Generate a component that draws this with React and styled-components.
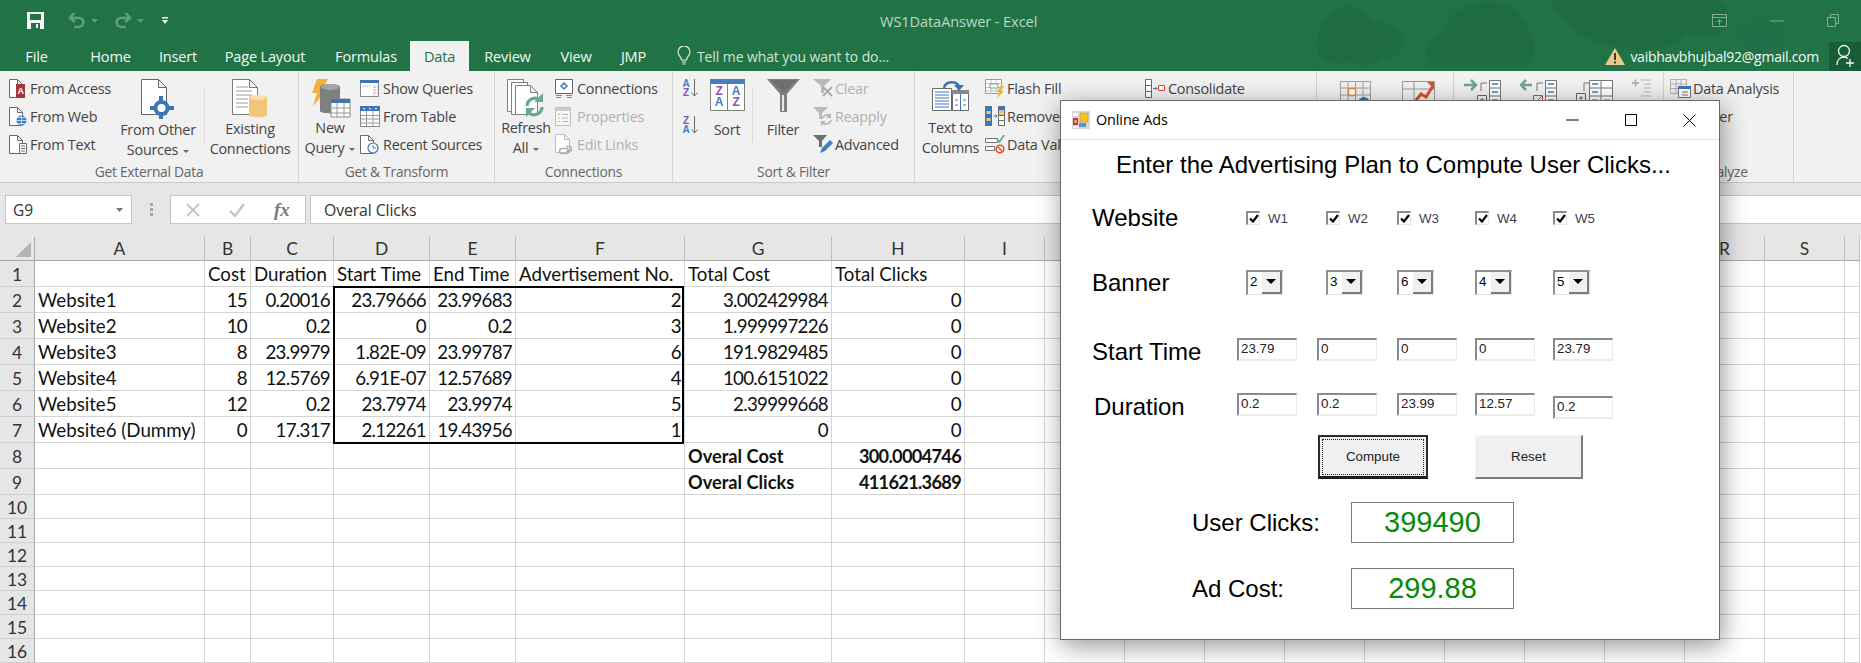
import styled, { createGlobalStyle } from 'styled-components';

const UI_FONT = '"Open Sans", "Noto Sans", sans-serif';
const CELL_FONT = 'Lato, "Open Sans", sans-serif';
const FORM_FONT = '"Liberation Sans", Arial, sans-serif';

const GlobalStyle = createGlobalStyle`
  html, body {
    margin: 0;
    padding: 0;
    background: #ffffff;
  }
`;

const Page = styled.div`
  position: relative;
  width: 1861px;
  height: 663px;
  overflow: hidden;
  font-family: ${UI_FONT};
  background: #ffffff;
`;

/* title bar + tabs */
const Head = styled.div`
  position: relative;
  height: 71px;
  background: #217346;
`;

const Blobs = styled.svg`
  position: absolute;
  top: 0;
  left: 1280px;
`;

const TitleBar = styled.div`
  position: relative;
  display: flex;
  align-items: center;
  height: 41px;
`;

const QuickAccess = styled.div`
  display: flex;
  align-items: center;
  width: 880px;
  padding-left: 27px;
  box-sizing: border-box;
  gap: 5px;
`;

const WindowTitle = styled.div`
  font-size: 14.6px;
  letter-spacing: -0.1px;
  color: #bcd6c7;
  white-space: nowrap;
`;

const WindowButtons = styled.div`
  display: flex;
  align-items: center;
  margin-left: auto;
  padding-right: 22px;
  gap: 43px;
`;

const TabBar = styled.div`
  position: relative;
  display: flex;
  height: 30px;
`;

const Tab = styled.div`
  width: ${props => props.$width}px;
  display: flex;
  align-items: center;
  justify-content: center;
  font-size: 14.6px;
  letter-spacing: -0.2px;
  color: ${props => props.$active ? '#217346' : '#f2f7f4'};
  background: ${props => props.$active ? '#f1f1f1' : 'transparent'};
`;

const TellMe = styled.div`
  display: flex;
  align-items: center;
  gap: 6px;
  margin-left: 16px;
  font-size: 14px;
  letter-spacing: -0.1px;
  color: #cfe3d7;
`;

const Account = styled.div`
  display: flex;
  align-items: center;
  gap: 5px;
  margin-left: auto;
  height: 100%;
  font-size: 14px;
  letter-spacing: -0.25px;
  color: #f4f8f6;
`;

const ShareBox = styled.div`
  display: flex;
  align-items: center;
  gap: 2px;
  height: 29px;
  width: 32px;
  margin-left: 5px;
  padding-left: 7px;
  box-sizing: border-box;
  background: #185c37;
  overflow: hidden;
`;

/* ribbon */
const Ribbon = styled.div`
  display: flex;
  height: 111px;
  background: #f1f1f1;
  border-bottom: 1px solid #c9c9c9;
  color: #444444;
  font-size: 14.4px;
  letter-spacing: -0.25px;
`;

const Group = styled.div`
  width: ${props => props.$width}px;
  flex: none;
  display: flex;
  flex-direction: column;
  box-sizing: border-box;
  padding-top: 3px;
  position: relative;
  border-right: ${props => props.$open ? 'none' : '1px solid #d4d4d4'};
`;

const GroupItems = styled.div`
  display: flex;
  height: 84px;
  padding-left: ${props => props.$pad || 0}px;
`;

const GroupLabel = styled.div`
  margin-top: auto;
  padding-bottom: 1px;
  text-align: ${props => props.$align || 'center'};
  padding-left: ${props => props.$pad || 0}px;
  font-size: 13.8px;
  color: #666666;
  line-height: 18px;
`;

const Stack = styled.div`
  display: flex;
  flex-direction: column;
  width: ${props => props.$width}px;
  flex: none;
`;

const SmallRow = styled.div`
  display: flex;
  align-items: center;
  height: 28px;
  white-space: nowrap;
  color: ${props => props.$off ? '#b1b1b1' : 'inherit'};
`;

const IconSlot = styled.div`
  width: ${props => props.$width}px;
  flex: none;
  display: flex;
  align-items: center;
  justify-content: flex-start;
`;

const BigButton = styled.div`
  width: ${props => props.$width}px;
  flex: none;
  display: flex;
  flex-direction: column;
  align-items: center;
  white-space: nowrap;
`;

const BigIcon = styled.div`
  height: 46px;
  padding-top: 5px;
  box-sizing: border-box;
  display: flex;
  align-items: flex-start;
  justify-content: center;
`;

const BigText = styled.div`
  line-height: 20px;
  text-align: center;
`;

const Caret = styled.span`
  display: inline-block;
  width: 0;
  height: 0;
  margin-left: 5px;
  vertical-align: 2px;
  border-left: 3px solid transparent;
  border-right: 3px solid transparent;
  border-top: 3px solid #666666;
`;

const InnerRule = styled.div`
  width: 1px;
  height: 54px;
  margin: 14px 0 0 ${props => props.$left || 0}px;
  background: #dcdcdc;
  flex: none;
`;

const Spacer = styled.div`
  width: ${props => props.$width}px;
  flex: none;
`;

const SortGap = styled.div`
  height: 9px;
`;

const TopIcons = styled.div`
  display: flex;
  gap: ${props => props.$gap || 0}px;
  padding-left: ${props => props.$pad || 0}px;
  padding-top: ${props => props.$top || 5}px;
`;

/* formula bar */
const FormulaArea = styled.div`
  display: flex;
  align-items: flex-start;
  height: 54px;
  box-sizing: border-box;
  padding-top: 12px;
  background: #e6e6e6;
`;

const NameBox = styled.div`
  display: flex;
  align-items: center;
  justify-content: space-between;
  width: 127px;
  height: 29px;
  margin-left: 5px;
  padding: 0 8px 0 7px;
  box-sizing: border-box;
  background: #ffffff;
  border: 1px solid #c6c6c6;
  font-size: 15.5px;
  color: #333333;
`;

const Grip = styled.div`
  width: 3px;
  margin: 8px 17px 0 18px;
  height: 13px;
  background: repeating-linear-gradient(#a5a5a5 0 3px, transparent 3px 5px);
`;

const FxBox = styled.div`
  display: flex;
  align-items: center;
  width: 136px;
  height: 29px;
  box-sizing: border-box;
  padding-left: 15px;
  gap: 29px;
  background: #ffffff;
  border: 1px solid #c6c6c6;
`;

const FxMark = styled.span`
  font-family: "Liberation Serif", serif;
  font-style: italic;
  font-weight: 700;
  font-size: 19px;
  color: #7a7a7a;
`;

const FormulaInput = styled.div`
  flex: 1;
  height: 29px;
  margin-left: 4px;
  padding-left: 13px;
  box-sizing: border-box;
  display: flex;
  align-items: center;
  background: #ffffff;
  border: 1px solid #c6c6c6;
  border-right: none;
  font-size: 15.8px;
  letter-spacing: -0.1px;
  color: #333333;
`;

/* worksheet */
const Sheet = styled.div`
  position: relative;
  display: grid;
  grid-template-columns: 35px 170px 46px 83px 96px 86px 169px 147px 133px repeat(11, 80px) 15px;
  grid-template-rows: 24px repeat(9, 26px) repeat(7, 24px);
  font-family: ${CELL_FONT};
  font-size: 18.7px;
  color: #111111;
`;

const Corner = styled.div`
  background: #e6e6e6;
  border-right: 1px solid #a8a8a8;
  border-bottom: 1px solid #a8a8a8;
  display: flex;
  align-items: flex-end;
  justify-content: flex-end;
  padding: 0 3px 3px 0;
`;

const ColHead = styled.div`
  background: #e6e6e6;
  border-right: 1px solid #bcbcbc;
  border-bottom: 1px solid #a8a8a8;
  text-align: center;
  font-size: 17.4px;
  line-height: 24px;
  color: #333333;
`;

const RowHead = styled.div`
  background: #e6e6e6;
  border-right: 1px solid #a8a8a8;
  border-bottom: 1px solid #cfcfcf;
  text-align: center;
  font-size: 17.4px;
  line-height: ${props => props.$height + 1}px;
  color: #333333;
`;

const Cell = styled.div`
  border-right: 1px solid #d4d4d4;
  border-bottom: 1px solid #d4d4d4;
  padding: 0 3px;
  line-height: ${props => props.$height + 1}px;
  text-align: ${props => props.$right ? 'right' : 'left'};
  font-weight: ${props => props.$bold ? 700 : 400};
  font-size: ${props => props.$bold ? '18.2px' : 'inherit'};
  letter-spacing: ${props => props.$right ? '-0.7px' : '0'};
  white-space: nowrap;
  overflow: visible;
`;

const SelectionBox = styled.div`
  position: absolute;
  grid-column: 5 / 8;
  grid-row: 3 / 9;
  inset: -1px 1px -1px -1px;
  border: 2px solid #000000;
`;

/* the Online Ads dialog */
const Dialog = styled.div`
  position: absolute;
  left: 1060px;
  top: 100px;
  width: 660px;
  height: 540px;
  box-sizing: border-box;
  background: #ffffff;
  border: 1px solid #6b6b6b;
  box-shadow: 2px 6px 24px rgba(0, 0, 0, 0.42);
  font-family: ${FORM_FONT};
  color: #000000;
`;

const DialogBar = styled.div`
  display: flex;
  align-items: center;
  height: 38px;
  padding-left: 11px;
  border-bottom: 1px solid #e3e3e3;
  font-family: ${UI_FONT};
  font-size: 14.4px;
  letter-spacing: -0.1px;
`;

const DialogTitle = styled.div`
  margin-left: 6px;
  margin-top: -2px;
`;

const DialogButtons = styled.div`
  display: flex;
  align-items: center;
  margin-left: auto;
  padding-right: 23px;
  gap: 46px;
`;

const Heading = styled.div`
  height: 52px;
  padding-left: 55px;
  line-height: 50px;
  font-size: 24px;
  white-space: nowrap;
`;

const FormRow = styled.div`
  display: grid;
  grid-template-columns: ${props => props.$columns};
  align-items: ${props => props.$align || 'center'};
  height: ${props => props.$height}px;
  margin-top: ${props => props.$top || 0}px;
  padding-left: 31px;
`;

const FieldLabel = styled.div`
  font-size: 24px;
  line-height: 24px;
  margin-top: ${props => props.$shift || 0}px;
  margin-left: ${props => props.$indent || 0}px;
`;

const CheckItem = styled.div`
  display: flex;
  align-items: center;
  gap: 8px;
  font-size: 13.33px;
  color: #3f3f50;
`;

const CheckBox = styled.div`
  width: 14px;
  height: 14px;
  box-sizing: border-box;
  display: flex;
  align-items: center;
  justify-content: center;
  background: #ffffff;
  border-top: 2px solid #8a8a8a;
  border-left: 2px solid #8a8a8a;
  border-right: 1px solid #e6e6e6;
  border-bottom: 1px solid #e6e6e6;
`;

const Combo = styled.div`
  display: flex;
  width: 37px;
  height: 25px;
  box-sizing: border-box;
  background: #ffffff;
  border-top: 2px solid #8f8f8f;
  border-left: 2px solid #8f8f8f;
  border-right: 1px solid #e3e3e3;
  border-bottom: 1px solid #e3e3e3;
  font-size: 13.33px;
`;

const ComboValue = styled.div`
  width: 14px;
  padding-left: 2px;
  line-height: 19px;
  box-sizing: border-box;
`;

const ComboArrow = styled.div`
  flex: 1;
  display: flex;
  align-items: center;
  justify-content: center;
  background: #f0f0f0;
  border-right: 2px solid #7d7d7d;
  border-bottom: 2px solid #7d7d7d;

  &::after {
    content: '';
    border-left: 5px solid transparent;
    border-right: 5px solid transparent;
    border-top: 5px solid #000000;
  }
`;

const TextBox = styled.div`
  width: 60px;
  height: 23px;
  box-sizing: border-box;
  padding-left: 2px;
  margin-top: ${props => props.$drop || 0}px;
  background: #ffffff;
  border-top: 2px solid #8a8a8a;
  border-left: 2px solid #8a8a8a;
  border-right: 1px solid #ececec;
  border-bottom: 2px solid #ececec;
  font-size: 13.33px;
  line-height: 18px;
  color: #222222;
`;

const ButtonRow = styled.div`
  display: flex;
  gap: 47px;
  margin-top: 19px;
  padding-left: 257px;
`;

const FormButton = styled.div`
  position: relative;
  width: ${props => props.$width}px;
  height: 44px;
  box-sizing: border-box;
  display: flex;
  align-items: center;
  justify-content: center;
  background: #f0f0f0;
  font-size: 13.33px;
  color: #222222;
  border: ${props => props.$focused ? '2px solid #2a2a2a' : '1px solid #f6f6f6'};
  border-bottom: ${props => props.$focused ? '3px solid #1c1c1c' : '2px solid #7d7d7d'};
  border-right: ${props => props.$focused ? '2px solid #2a2a2a' : '2px solid #7d7d7d'};
  outline: ${props => props.$focused ? '1px dotted #222222' : 'none'};
  outline-offset: -5px;
`;

const OutputRow = styled.div`
  display: flex;
  align-items: center;
  margin-top: ${props => props.$top}px;
  padding-left: 131px;
`;

const OutputLabel = styled.div`
  width: 159px;
  flex: none;
  font-size: 24px;
`;

const OutputBox = styled.div`
  width: 163px;
  height: 41px;
  box-sizing: border-box;
  display: flex;
  align-items: center;
  justify-content: center;
  border: 1px solid #7c7c7c;
  font-size: 29px;
  color: #078a07;
`;

/* ---------- drawings ---------- */

const Svg = ({ w, h, children }) => (
  <svg width={w} height={h} viewBox={`0 0 ${w} ${h}`} fill="none" style={{ display: 'block' }}>{children}</svg>
);

const Sheet16 = ({ x = 0, y = 0, w = 13, h = 18, stroke = '#6a6a6a', fold = 5 }) => (
  <path
    d={`M${x + .5} ${y + .5}h${w - fold}l${fold} ${fold}v${h - fold}h-${w}zM${x + w - fold + .5} ${y + .5}v${fold}h${fold}`}
    fill="#ffffff"
    stroke={stroke}
  />
);

const SaveIcon = () => (
  <Svg w={17} h={17}>
    <path d="M0 0h17v17H0z" fill="#f3f6f4" />
    <path d="M3 2h11v6H3z" fill="#217346" />
    <path d="M4 11h9v6H4z" fill="#217346" />
    <path d="M9 12h2v4H9z" fill="#f3f6f4" />
  </Svg>
);

const ArrowIcon = ({ flip }) => (
  <svg width="18" height="17" viewBox="0 0 18 17" fill="none" style={{ display: 'block', transform: flip ? 'scaleX(-1)' : 'none' }}>
    <path d="M6 1L2 6l5 4M2.5 6H11c6 0 6 9 -1 9H6" stroke="#5f9d7c" strokeWidth="2.6" />
  </svg>
);

const TinyDown = ({ color = '#5f9d7c' }) => (
  <Svg w={7} h={4}><path d="M0 0h7L3.500 4z" fill={color} /></Svg>
);

const CustomizeIcon = () => (
  <Svg w={6} h={8}>
    <path d="M0 0h6v1.500H0z" fill="#f3f6f4" />
    <path d="M0 3h6L3 7z" fill="#f3f6f4" />
  </Svg>
);

const RibbonDisplayIcon = () => (
  <Svg w={15} h={13}>
    <path d="M.5 .5h14v12H.5zM.5 3.500h14M7.500 11V6M5 8l2.500-2.500L10 8" stroke="#7fae94" />
  </Svg>
);

const MinIcon = ({ color = '#7fae94', w = 14 }) => (
  <Svg w={w} h={2}><path d={`M0 1h${w}`} stroke={color} /></Svg>
);

const RestoreIcon = () => (
  <Svg w={12} h={13}>
    <path d="M.5 3.500h8v9h-8zM3.500 3.500v-3h8v9h-3" stroke="#7fae94" />
  </Svg>
);

const Bulb = () => (
  <Svg w={14} h={20}>
    <path d="M4.500 14C4 10 1 9.500 1 6a6 6 0 0 1 12 0c0 3.500-3 4-3.500 8z" stroke="#e4efe9" strokeWidth="1.100" />
    <path d="M5 16h4M5.500 18h3" stroke="#e4efe9" strokeWidth="1.200" />
  </Svg>
);

const WarnIcon = () => (
  <Svg w={20} h={17}>
    <path d="M10 0l10 17H0z" fill="#e9c98d" />
    <path d="M9 5h2v7H9zM9 13.500h2v2H9z" fill="#4a3a1c" />
  </Svg>
);

const PersonPlus = () => (
  <Svg w={19} h={24}>
    <circle cx="8" cy="7" r="5.500" stroke="#f4f8f6" strokeWidth="1.300" />
    <path d="M1 21c0-5 3-8 7-8 2 0 3 .6 4 1.500" stroke="#f4f8f6" strokeWidth="1.300" />
    <path d="M14 15v8M10 19h8" stroke="#f4f8f6" strokeWidth="1.300" />
  </Svg>
);

const FromAccessIcon = () => (
  <Svg w={18} h={19}>
    <Sheet16 x={0} y={0} w={13} h={18} />
    <path d="M7 5h9v14H7z" fill="#a4373a" />
    <text x="11.500" y="15" textAnchor="middle" fontSize="9" fontWeight="700" fontFamily={FORM_FONT} fill="#ffffff">A</text>
  </Svg>
);

const FromWebIcon = () => (
  <Svg w={18} h={19}>
    <Sheet16 x={0} y={0} w={13} h={18} />
    <circle cx="12.500" cy="13.500" r="5" fill="#3f7fc1" />
    <path d="M7.500 13.500h10M12.500 8.500v10M9 10.500h7M9 16.500h7" stroke="#ffffff" strokeWidth=".7" />
  </Svg>
);

const FromTextIcon = () => (
  <Svg w={18} h={19}>
    <Sheet16 x={0} y={0} w={13} h={18} />
    <path d="M10.500 8.500h7v10h-7z" fill="#ffffff" stroke="#6a6a6a" />
    <path d="M12 11h4M12 13.500h4M12 16h4" stroke="#6a6a6a" />
  </Svg>
);

const OtherSourcesIcon = () => (
  <Svg w={34} h={44}>
    <Sheet16 x={0} y={0} w={25} h={35} fold={8} stroke="#666666" />
    <path d="M20 17v7M20 33v7M9 29h7M25 29h8" stroke="#3f75b5" strokeWidth="4" />
    <circle cx="20.500" cy="29" r="6" stroke="#3f75b5" strokeWidth="4" fill="#ffffff" />
  </Svg>
);

const ExistingIcon = () => (
  <Svg w={36} h={40}>
    <Sheet16 x={0} y={0} w={25} h={35} fold={8} stroke="#7a7a7a" />
    <path d="M4 8h12M4 12h16M4 16h16M4 20h12M4 24h12M4 28h12" stroke="#9a9a9a" />
    <path d="M17 18c0-2 18-2 18 0v18c0 3-18 3-18 0z" fill="#efc67a" />
    <ellipse cx="26" cy="18.500" rx="8" ry="2.500" fill="#f8e2b2" />
  </Svg>
);

const NewQueryIcon = () => (
  <Svg w={41} h={39}>
    <path d="M7 0h11l-6 11h5L3 27l4-13H2z" fill="#f2b13f" />
    <path d="M10 8c0-4 20-4 20 0v24c0 3-20 3-20 0z" fill="#7f7f7f" />
    <ellipse cx="20" cy="8" rx="9" ry="3" fill="#a5a5a5" />
    <path d="M21 20h19v18H21z" fill="#ffffff" stroke="#8a8a8a" />
    <path d="M21 20h19v4H21z" fill="#3f75b5" />
    <path d="M21 29h19M21 34h19M27 24v14M34 24v14" stroke="#9a9a9a" />
  </Svg>
);

const ShowQueriesIcon = () => (
  <Svg w={19} h={19}>
    <path d="M.5 1.500h18v16H.5z" fill="#ffffff" stroke="#8a8a8a" />
    <path d="M0 1h19v3H0z" fill="#3f75b5" />
    <path d="M14 6v11M15 8h3M15 11h3M15 14h3M3 7h8" stroke="#9a9a9a" strokeDasharray="1 1" />
  </Svg>
);

const FromTableIcon = () => (
  <Svg w={20} h={22}>
    <path d="M.5 1.500h19v20H.5z" fill="#ffffff" stroke="#8a8a8a" />
    <path d="M0 1h20v5H0z" fill="#3f75b5" />
    <path d="M3 3h2L4 5zM9 3h2l-1 2zM15 3h2l-1 2z" fill="#ffffff" />
    <path d="M1 10.500h18M1 14h18M1 18h18M6.500 6v15M13 6v15" stroke="#9a9a9a" />
  </Svg>
);

const RecentIcon = () => (
  <Svg w={19} h={20}>
    <Sheet16 x={0} y={1} w={13} h={18} />
    <circle cx="13" cy="14" r="5" fill="#ffffff" stroke="#3f75b5" strokeWidth="1.200" />
    <path d="M13 11v3h3" stroke="#3f75b5" />
  </Svg>
);

const RefreshIcon = () => (
  <Svg w={38} h={39}>
    <path d="M.5 .5h16v32H.5z" fill="#ffffff" stroke="#7f7f7f" />
    <path d="M4.500 3.500h16v32h-16z" fill="#ffffff" stroke="#7f7f7f" />
    <Sheet16 x={8} y={6} w={22} h={29} fold={7} stroke="#7f7f7f" />
    <path d="M20 27a8 8 0 0 1 13-6M35 28a8 8 0 0 1-13 6" stroke="#69a98f" strokeWidth="3.200" />
    <path d="M36 14v9h-9zM19 38v-9h9z" fill="#69a98f" />
  </Svg>
);

const ConnectionsIcon = () => (
  <Svg w={18} h={19}>
    <path d="M.5 .5h17v14H.5z" fill="#ffffff" stroke="#666666" />
    <path d="M1 16.500h6M11 16.500h6M1 18.500h5M12 18.500h5" stroke="#888888" />
    <path d="M9 3l4 4-4 4-4-4z" fill="#3f7fc1" />
    <circle cx="9" cy="7" r="1.500" fill="#ffffff" />
  </Svg>
);

const PropertiesIcon = () => (
  <Svg w={16} h={19}>
    <path d="M.5 .5h15v18H.5z" fill="#f7f7f7" stroke="#bdbdbd" />
    <path d="M1 1h14v3H1z" fill="#cccccc" />
    <path d="M3 7.500h2M7 7.500h6M3 11h2M7 11h6M3 14.500h2M7 14.500h6" stroke="#b5b5b5" />
  </Svg>
);

const EditLinksIcon = () => (
  <Svg w={18} h={21}>
    <Sheet16 x={0} y={0} w={14} h={18} stroke="#bdbdbd" />
    <path d="M7 14.500h4a2.500 2.500 0 0 1 0 5H7a2.500 2.500 0 0 1 0-5zM11 12.500h3a2.500 2.500 0 0 1 0 5h-3" stroke="#b0b0b0" strokeWidth="1.500" />
  </Svg>
);

const Letters = ({ x, y, first, second, firstColor, secondColor, size = 10 }) => (
  <>
    <text x={x} y={y} textAnchor="middle" fontSize={size} fontWeight="700" fontFamily={FORM_FONT} fill={firstColor}>{first}</text>
    <text x={x} y={y + size - 1} textAnchor="middle" fontSize={size} fontWeight="700" fontFamily={FORM_FONT} fill={secondColor}>{second}</text>
  </>
);

const SortSmall = ({ down }) => (
  <Svg w={18} h={20}>
    <Letters
      x={5}
      y={9}
      first={down ? 'Z' : 'A'}
      second={down ? 'A' : 'Z'}
      firstColor={down ? '#7f54b3' : '#3f7fc1'}
      secondColor={down ? '#3f7fc1' : '#7f54b3'}
    />
    <path d="M13.500 1v17M10.500 14.500l3 3.500 3-3.500" stroke="#6a6a6a" />
  </Svg>
);

const SortBig = () => (
  <Svg w={35} h={32}>
    <path d="M.5 .5h34v31H.5zM17.500 5v26" fill="#ffffff" stroke="#7f7f7f" />
    <path d="M0 0h35v5H0z" fill="#4a7ebb" />
    <Letters x={9} y={16} first="Z" second="A" firstColor="#7f54b3" secondColor="#3f7fc1" size={12} />
    <Letters x={26} y={16} first="A" second="Z" firstColor="#3f7fc1" secondColor="#7f54b3" size={12} />
  </Svg>
);

const FunnelBig = () => (
  <Svg w={33} h={33}>
    <path d="M0 0h33L20 15v18h-7V15z" fill="#7f7f7f" />
    <path d="M15 16h2v16h-2z" fill="#e8e8e8" />
    <path d="M4 1h25L18 13h-3z" fill="#6f6f6f" />
  </Svg>
);

const ClearIcon = () => (
  <Svg w={20} h={20}>
    <path d="M0 1h18l-7 7v7H8V8z" fill="#b9b9b9" />
    <path d="M10 9l9 9M19 9l-9 9" stroke="#a9a9a9" strokeWidth="1.800" />
  </Svg>
);

const ReapplyIcon = () => (
  <Svg w={20} h={20}>
    <path d="M0 1h15l-6 6v6H6V7z" fill="#b9b9b9" />
    <path d="M9 13a5 5 0 0 1 8-3M18 14a5 5 0 0 1-8 3" stroke="#b5b5b5" strokeWidth="1.700" />
    <path d="M18 7v5h-5zM8 20v-5h5z" fill="#b5b5b5" />
  </Svg>
);

const AdvancedIcon = () => (
  <Svg w={21} h={20}>
    <path d="M0 1h14L9 7v6H6V7z" fill="#6f6f6f" />
    <path d="M7 19l2-5 8-8 3 3-8 8z" fill="#3f7fc1" />
  </Svg>
);

const TextColumnsIcon = () => (
  <Svg w={37} h={32}>
    <path d="M.5 9.500h19v22H.5z" fill="#ffffff" stroke="#6a6a6a" />
    <path d="M3 13h14M3 16h14M3 19h14M3 22h14M3 25h14M3 28h14" stroke="#3f75b5" />
    <path d="M20.500 11.500h16v20h-16z" fill="#ffffff" stroke="#6a6a6a" />
    <path d="M20 11h17v4H20z" fill="#888888" />
    <path d="M28.500 15v16M23 21h3M31 21h3M23 26h3M31 26h3" stroke="#3f75b5" />
    <path d="M12 9a8 7 0 0 1 15-2" stroke="#3f75b5" strokeWidth="2.500" />
    <path d="M22 6h10l-5 6z" fill="#3f75b5" />
  </Svg>
);

const FlashFillIcon = () => (
  <Svg w={20} h={19}>
    <path d="M.5 .5h16v14H.5z" fill="#ffffff" stroke="#9a9a9a" />
    <path d="M1 4.500h16M1 8.500h16M1 12h16M6 1v14M11 1v14" stroke="#c2c2c2" />
    <path d="M5 5h8v4H5z" fill="#ffffff" stroke="#69a98f" />
    <path d="M15 7h4l-3 5h3l-7 7 2-6h-2z" fill="#f2b13f" />
  </Svg>
);

const RemoveDupIcon = () => (
  <Svg w={20} h={20}>
    <path d="M0 0h7v20H0z" fill="#3f75b5" />
    <path d="M1.500 5h4v3h-4zM1.500 12h4v3h-4z" fill="#efc67a" />
    <path d="M13.500 .5h6v19h-6zM14 5h5M14 9.500h5M14 14.500h5" fill="#ffffff" stroke="#6a6a6a" />
    <path d="M14 0h6v4h-6z" fill="#3f75b5" />
    <path d="M14 5h5v4h-5z" fill="#efc67a" />
    <path d="M8.500 10h3M10.500 8.500l1.500 1.500-1.500 1.500" stroke="#3f75b5" />
  </Svg>
);

const DataValIcon = () => (
  <Svg w={20} h={19}>
    <path d="M.5 3.500h12v4H.5zM.5 11.500h9v4H.5z" fill="#ffffff" stroke="#777777" />
    <path d="M12 4l2.500 3L19 0" stroke="#5aa886" strokeWidth="1.600" />
    <circle cx="15" cy="14" r="3.800" fill="#ffffff" stroke="#d9512c" strokeWidth="1.500" />
    <path d="M12.500 11.500l5 5" stroke="#d9512c" strokeWidth="1.500" />
  </Svg>
);

const ConsolidateIcon = () => (
  <Svg w={20} h={19}>
    <path d="M.5 .5h6v18h-6zM1 6.500h5M1 12.500h5" fill="#ffffff" stroke="#6a6a6a" />
    <path d="M8 9.500h4M10.500 8l1.500 1.500L10.500 11" stroke="#3f7fc1" />
    <path d="M13.500 6.500h6v5h-6z" fill="#ffffff" stroke="#d9512c" />
  </Svg>
);

const WhatIfIcon = () => (
  <Svg w={31} h={24}>
    <path d="M.5 .5h30v22H.5zM1 7h29M1 14h29M8 1v22M15.500 1v22M23 1v22" stroke="#a0a0a0" />
    <path d="M8.500 7.500h7v7h-7z" fill="#ffffff" stroke="#e08a2c" strokeWidth="1.400" />
    <circle cx="24" cy="22" r="6" fill="#3f75b5" />
  </Svg>
);

const ForecastIcon = () => (
  <Svg w={33} h={24}>
    <path d="M.5 .5h32v23H.5zM1 8h32M12 1v23" stroke="#9a9a9a" />
    <path d="M12 22l7-9 5 3 7-11" stroke="#d9512c" strokeWidth="3" />
    <path d="M25 1h7v7z" fill="#d9512c" />
  </Svg>
);

const GroupIcon = ({ back, red }) => (
  <Svg w={37} h={26}>
    <path
      d={back ? 'M12 6H1M6 1L1 6l5 5' : 'M0 6h11M7 1l5 5-5 5'}
      stroke="#6fa38d"
      strokeWidth="2.500"
    />
    <path d="M17 12V4h6" stroke="#777777" />
    {red
      ? <path d="M13.500 16.500h9v9h-9zM14 25l8-8" stroke="#d9512c" />
      : <path d="M13.500 16.500h9v9h-9zM16 21h4M18 19v4" stroke="#666666" />}
    <path d="M25.500 1.500h11v23h-11zM26 9h10M26 17h10" fill="#ffffff" stroke="#777777" />
    <path d="M28 5h6M28 13h6M28 21h6" stroke="#3f7fc1" strokeWidth="1.300" />
  </Svg>
);

const SubtotalIcon = () => (
  <Svg w={37} h={26}>
    <path d="M8 12V4h6" stroke="#777777" />
    <path d="M.5 14.500h9v9h-9zM3 19h4M5 17v4" stroke="#666666" />
    <path d="M13.500 1.500h23v23h-23zM14 9h22M14 17h22M25 2v22" fill="#ffffff" stroke="#777777" />
    <path d="M16 5h6M16 13h6" stroke="#3f7fc1" strokeWidth="1.300" />
    <path d="M16 21h6M28 21h6" stroke="#e08a2c" strokeWidth="1.300" />
  </Svg>
);

const ShowDetailIcon = () => (
  <Svg w={19} h={20}>
    <path d="M0 4h7M3.500 .5v7" stroke="#b5b5b5" strokeWidth="2" />
    <path d="M9 1h10M12 5h7M12 9h7M12 13h7M9 17h10" stroke="#b5b5b5" />
  </Svg>
);

const DataAnalysisIcon = () => (
  <Svg w={21} h={19}>
    <path d="M.5 .5h16v14H.5zM1 5h16M1 9.500h16M6 1v14M11 1v14" stroke="#b0b0b0" />
    <path d="M8.500 7.500h12v11h-12z" fill="#ffffff" stroke="#777777" />
    <path d="M8 7h13v3H8z" fill="#3f75b5" />
    <path d="M12 13h6M12 16h6" stroke="#777777" />
  </Svg>
);

const LogoIcon = () => (
  <Svg w={18} h={18}>
    <path d="M0 0h18v18H0z" fill="#d9d9d9" />
    <path d="M8 2h8v9H8z" fill="#f5c320" stroke="#c08a10" strokeWidth=".5" />
    <path d="M1 7h5v7H1z" fill="#c8372d" />
    <path d="M2.500 9h2v3h-2z" fill="#f2b8a8" />
    <path d="M7 12h7v4H7z" fill="#5b8fd8" />
    <path d="M1 2h5v3H1zM1 15h5v2H1z" fill="#f7f7f7" />
  </Svg>
);

const TriangleCorner = () => (
  <Svg w={15} h={15}><path d="M15 0v15H0z" fill="#b4b4b4" /></Svg>
);

const Tick = () => (
  <Svg w={10} h={9}><path d="M1 4.500l3 3L9 1" stroke="#000000" strokeWidth="2.200" /></Svg>
);

const CloudBlobs = () => (
  <Blobs width="581" height="68" viewBox="0 0 581 68">
    <path d="M40 56c-8-16 0-38 18-48 16-6 30 4 34 14 12-2 30 4 32 18 2 10-8 20-22 18-8 8-20 8-30 4-14 2-26 2-32-6z" fill="#1f6c42" />
    <path d="M150 66c-8-12-2-28 12-34 4-16 20-28 44-30 24-2 42 14 44 32 6 8 6 22-4 32z" fill="#1f6c42" />
    <path d="M270 0h170c10 10 14 26-2 34-10 4-22 4-30 0-18 14-42 20-68 14-22-4-54-14-70-48z" fill="#1f6c42" />
    <path d="M460 24c14-10 40-6 46 8 6 14-10 24-26 22-16 0-32-18-20-30z" fill="#20704a" />
  </Blobs>
);

/* ---------- data ---------- */

const TABS = [
  ['File', 73], ['Home', 75], ['Insert', 60], ['Page Layout', 114], ['Formulas', 88],
  ['Data', 59, true], ['Review', 77], ['View', 60], ['JMP', 55],
];

// the last column is only a sliver at the window edge, so it gets no letter
const COLUMNS = [...'ABCDEFGHIJKLMNOPQRS', ''];

const ROWS = [
  ['', 'Cost', 'Duration', 'Start Time', 'End Time', 'Advertisement No.', 'Total Cost', 'Total Clicks'],
  ['Website1', '15', '0.20016', '23.79666', '23.99683', '2', '3.002429984', '0'],
  ['Website2', '10', '0.2', '0', '0.2', '3', '1.999997226', '0'],
  ['Website3', '8', '23.9979', '1.82E-09', '23.99787', '6', '191.9829485', '0'],
  ['Website4', '8', '12.5769', '6.91E-07', '12.57689', '4', '100.6151022', '0'],
  ['Website5', '12', '0.2', '23.7974', '23.9974', '5', '2.39999668', '0'],
  ['Website6 (Dummy)', '0', '17.317', '2.12261', '19.43956', '1', '0', '0'],
  ['', '', '', '', '', '', 'Overal Cost', '300.0004746'],
  ['', '', '', '', '', '', 'Overal Clicks', '411621.3689'],
  [], [], [], [], [], [], [],
];

const isNumber = value => /^[\d.]+(E-\d+)?$/.test(value);

const BANNERS = ['2', '3', '6', '4', '5'];
const STARTS = ['23.79', '0', '0', '0', '23.79'];
const DURATIONS = ['0.2', '0.2', '23.99', '12.57', '0.2'];
const SITES = ['W1', 'W2', 'W3', 'W4', 'W5'];

const CHECK_COLUMNS = '154px 80px 71px 78px 78px 60px';
const BOX_COLUMNS = '145px 80px 80px 78px 78px 60px';

const Small = ({ icon, slot, off, children }) => (
  <SmallRow $off={off}>
    <IconSlot $width={slot}>{icon}</IconSlot>
    {children}
  </SmallRow>
);

const Big = ({ width, icon, lines, caret }) => (
  <BigButton $width={width}>
    <BigIcon>{icon}</BigIcon>
    {lines.map((line, i) => (
      <BigText key={line}>
        {line}
        {caret && i === lines.length - 1 && <Caret />}
      </BigText>
    ))}
  </BigButton>
);

const RibbonBar = () => (
  <Ribbon>
    <Group $width={299}>
      <GroupItems $pad={9}>
        <Stack $width={109}>
          <Small slot={21} icon={<FromAccessIcon />}>From Access</Small>
          <Small slot={21} icon={<FromWebIcon />}>From Web</Small>
          <Small slot={21} icon={<FromTextIcon />}>From Text</Small>
        </Stack>
        <Big width={80} icon={<OtherSourcesIcon />} lines={['From Other', 'Sources']} caret />
        <InnerRule $left={6} />
        <Big width={90} icon={<ExistingIcon />} lines={['Existing', 'Connections']} />
      </GroupItems>
      <GroupLabel>Get External Data</GroupLabel>
    </Group>
    <Group $width={196}>
      <GroupItems $pad={1}>
        <Big width={60} icon={<NewQueryIcon />} lines={['New', 'Query']} caret />
        <Stack $width={130}>
          <Small slot={23} icon={<ShowQueriesIcon />}>Show Queries</Small>
          <Small slot={23} icon={<FromTableIcon />}>From Table</Small>
          <Small slot={23} icon={<RecentIcon />}>Recent Sources</Small>
        </Stack>
      </GroupItems>
      <GroupLabel>Get &amp; Transform</GroupLabel>
    </Group>
    <Group $width={178}>
      <GroupItems $pad={2}>
        <Big width={58} icon={<RefreshIcon />} lines={['Refresh', 'All']} caret />
        <Stack $width={116}>
          <Small slot={22} icon={<ConnectionsIcon />}>Connections</Small>
          <Small slot={22} off icon={<PropertiesIcon />}>Properties</Small>
          <Small slot={22} off icon={<EditLinksIcon />}>Edit Links</Small>
        </Stack>
      </GroupItems>
      <GroupLabel>Connections</GroupLabel>
    </Group>
    <Group $width={242}>
      <GroupItems $pad={8}>
        <Stack $width={24}>
          <SmallRow><SortSmall /></SmallRow>
          <SortGap />
          <SmallRow><SortSmall down /></SmallRow>
        </Stack>
        <Big width={44} icon={<SortBig />} lines={['Sort']} />
        <InnerRule $left={3} />
        <Big width={60} icon={<FunnelBig />} lines={['Filter']} />
        <Stack $width={100}>
          <Small slot={22} off icon={<ClearIcon />}>Clear</Small>
          <Small slot={22} off icon={<ReapplyIcon />}>Reapply</Small>
          <Small slot={22} icon={<AdvancedIcon />}>Advanced</Small>
        </Stack>
      </GroupItems>
      <GroupLabel>Sort &amp; Filter</GroupLabel>
    </Group>
    <Group $width={402}>
      <GroupItems $pad={1}>
        <Big width={69} icon={<TextColumnsIcon />} lines={['Text to', 'Columns']} />
        <Stack $width={160}>
          <Small slot={22} icon={<FlashFillIcon />}>Flash Fill</Small>
          <Small slot={22} icon={<RemoveDupIcon />}>Remove Duplicates</Small>
          <Small slot={22} icon={<DataValIcon />}>Data Validation</Small>
        </Stack>
        <Stack $width={120}>
          <Small slot={23} icon={<ConsolidateIcon />}>Consolidate</Small>
        </Stack>
      </GroupItems>
    </Group>
    <Group $width={137}>
      <TopIcons $pad={23} $gap={31} $top={7}>
        <WhatIfIcon />
        <ForecastIcon />
      </TopIcons>
    </Group>
    <Group $width={210}>
      <TopIcons $pad={10} $gap={19} $top={5}>
        <GroupIcon />
        <GroupIcon back red />
        <SubtotalIcon />
        <ShowDetailIcon />
      </TopIcons>
    </Group>
    <Group $width={130}>
      <GroupItems $pad={6}>
        <Stack $width={122}>
          <Small slot={23} icon={<DataAnalysisIcon />}>Data Analysis</Small>
          <Small slot={23}>Solver</Small>
        </Stack>
      </GroupItems>
      <GroupLabel $align="left" $pad={36}>Analyze</GroupLabel>
    </Group>
    <Group $width={67} $open />
  </Ribbon>
);

const Worksheet = () => (
  <Sheet>
    <Corner><TriangleCorner /></Corner>
    {COLUMNS.map(col => <ColHead key={col}>{col}</ColHead>)}
    {ROWS.map((row, r) => {
      const height = r < 9 ? 26 : 24;
      return [
        <RowHead key={`h${r}`} $height={height}>{r + 1}</RowHead>,
        ...COLUMNS.map((col, c) => {
          const value = row[c] || '';
          return (
            <Cell key={col + r} $height={height} $right={isNumber(value)} $bold={r >= 7}>
              {value}
            </Cell>
          );
        }),
      ];
    })}
    <SelectionBox />
  </Sheet>
);

const OnlineAds = () => (
  <Dialog>
    <DialogBar>
      <LogoIcon />
      <DialogTitle>Online Ads</DialogTitle>
      <DialogButtons>
        <MinIcon color="#000000" w={13} />
        <Svg w={12} h={12}><path d="M.5 .5h11v11H.5z" stroke="#000000" /></Svg>
        <Svg w={13} h={13}><path d="M.5 .5l12 12M12.500 .5l-12 12" stroke="#000000" /></Svg>
      </DialogButtons>
    </DialogBar>
    <Heading>Enter the Advertising Plan to Compute User Clicks...</Heading>
    <FormRow $columns={CHECK_COLUMNS} $height={52}>
      <FieldLabel>Website</FieldLabel>
      {SITES.map(site => (
        <CheckItem key={site}>
          <CheckBox><Tick /></CheckBox>
          {site}
        </CheckItem>
      ))}
    </FormRow>
    <FormRow $columns={CHECK_COLUMNS} $height={25} $top={25}>
      <FieldLabel $shift={2}>Banner</FieldLabel>
      {BANNERS.map(value => (
        <Combo key={value}>
          <ComboValue>{value}</ComboValue>
          <ComboArrow />
        </Combo>
      ))}
    </FormRow>
    <FormRow $columns={BOX_COLUMNS} $height={23} $top={44} $align="start">
      <FieldLabel $shift={2}>Start Time</FieldLabel>
      {STARTS.map((value, i) => <TextBox key={i}>{value}</TextBox>)}
    </FormRow>
    <FormRow $columns={BOX_COLUMNS} $height={23} $top={32} $align="start">
      <FieldLabel $shift={2} $indent={2}>Duration</FieldLabel>
      {DURATIONS.map((value, i) => <TextBox key={i} $drop={i === 4 ? 3 : 0}>{value}</TextBox>)}
    </FormRow>
    <ButtonRow>
      <FormButton $width={110} $focused>Compute</FormButton>
      <FormButton $width={108}>Reset</FormButton>
    </ButtonRow>
    <OutputRow $top={23}>
      <OutputLabel>User Clicks:</OutputLabel>
      <OutputBox>399490</OutputBox>
    </OutputRow>
    <OutputRow $top={25}>
      <OutputLabel>Ad Cost:</OutputLabel>
      <OutputBox>299.88</OutputBox>
    </OutputRow>
  </Dialog>
);

const App = () => (
  <Page>
    <GlobalStyle />
    <Head>
      <CloudBlobs />
      <TitleBar>
        <QuickAccess>
          <SaveIcon />
          <Spacer $width={14} />
          <ArrowIcon />
          <TinyDown />
          <Spacer $width={6} />
          <ArrowIcon flip />
          <TinyDown />
          <Spacer $width={8} />
          <CustomizeIcon />
        </QuickAccess>
        <WindowTitle>WS1DataAnswer - Excel</WindowTitle>
        <WindowButtons>
          <RibbonDisplayIcon />
          <MinIcon />
          <RestoreIcon />
        </WindowButtons>
      </TitleBar>
      <TabBar>
        {TABS.map(([label, width, active]) => (
          <Tab key={label} $width={width} $active={active}>{label}</Tab>
        ))}
        <TellMe>
          <Bulb />
          Tell me what you want to do...
        </TellMe>
        <Account>
          <WarnIcon />
          vaibhavbhujbal92@gmail.com
          <ShareBox>
            <PersonPlus />
          </ShareBox>
        </Account>
      </TabBar>
    </Head>
    <RibbonBar />
    <FormulaArea>
      <NameBox>
        G9
        <TinyDown color="#777777" />
      </NameBox>
      <Grip />
      <FxBox>
        <Svg w={14} h={14}><path d="M1 1l12 12M13 1L1 13" stroke="#c4c4c4" strokeWidth="1.800" /></Svg>
        <Svg w={16} h={14}><path d="M1 8l5 5L15 1" stroke="#c4c4c4" strokeWidth="2.400" /></Svg>
        <FxMark>fx</FxMark>
      </FxBox>
      <FormulaInput>Overal Clicks</FormulaInput>
    </FormulaArea>
    <Worksheet />
    <OnlineAds />
  </Page>
);

export default App;
